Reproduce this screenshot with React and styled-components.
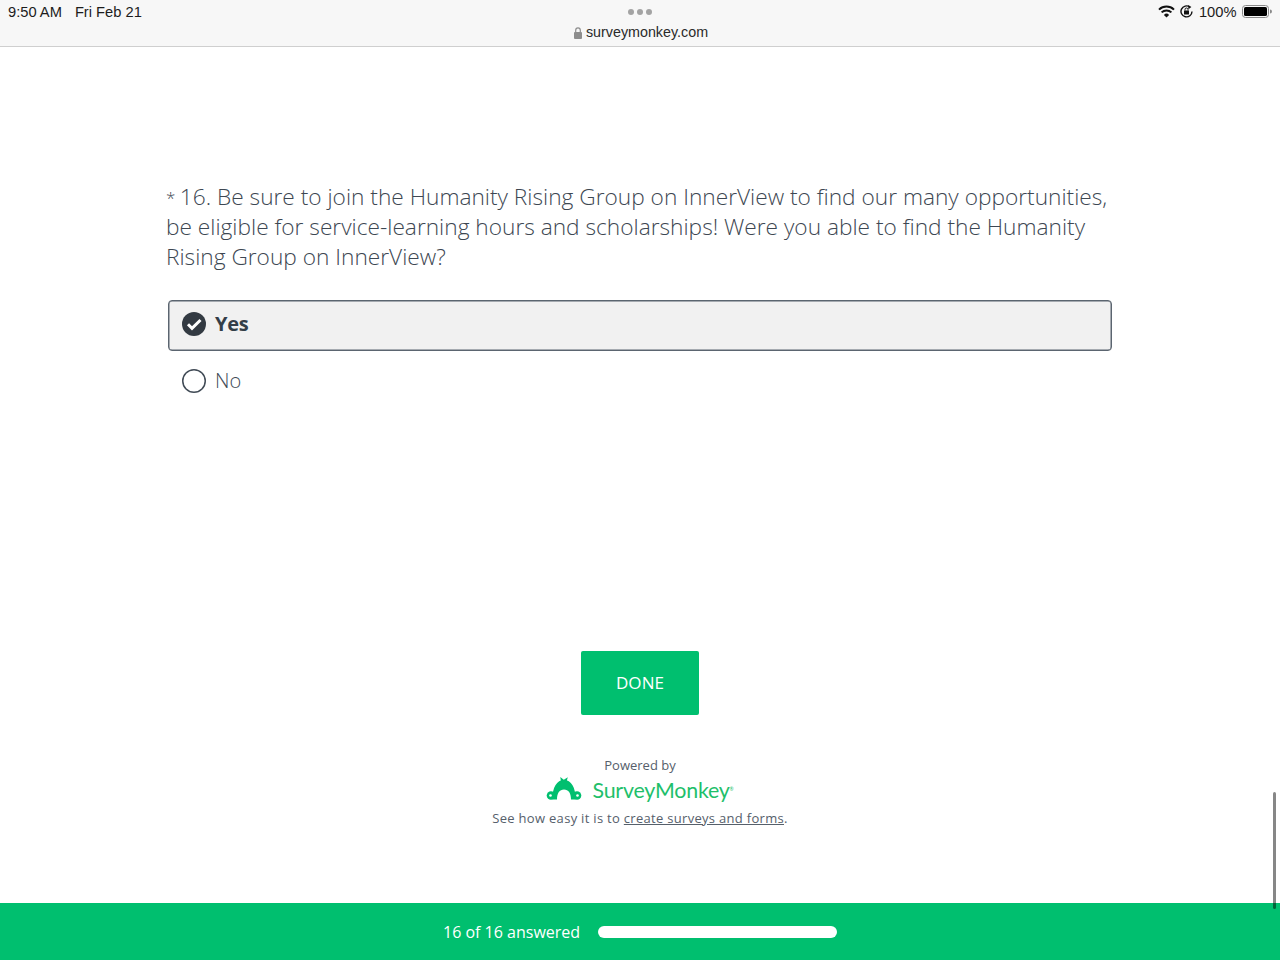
import React from "react";
import styled, { createGlobalStyle } from "styled-components";

const Global = createGlobalStyle`
  html, body {
    margin: 0;
    padding: 0;
    background: #fff;
    overflow: hidden;
  }
  * {
    box-sizing: border-box;
  }
`;

const Page = styled.div`
  position: relative;
  width: 1280px;
  height: 960px;
  display: flex;
  flex-direction: column;
  overflow: hidden;
  font-family: "Open Sans", "Liberation Sans", sans-serif;
  color: #333e48;
`;

const StatusBar = styled.header`
  height: 47px;
  flex: none;
  background: #f7f7f7;
  border-bottom: 1px solid #cfcfcf;
  display: grid;
  grid-template-columns: 1fr auto 1fr;
  padding: 0 8px;
  font-family: "Liberation Sans", sans-serif;
  font-size: 14.7px;
  color: #1c1c1c;
`;

const StatusLeft = styled.div`
  display: flex;
  gap: 13px;
  height: 23px;
  align-items: center;
`;

const StatusCenter = styled.div`
  display: flex;
  flex-direction: column;
  align-items: center;
  padding-top: 9px;
`;

const Dots = styled.div`
  display: flex;
  gap: 3px;
  height: 6px;
  margin-bottom: 9px;
`;

const Dot = styled.span`
  width: 6px;
  height: 6px;
  border-radius: 50%;
  background: #a3a3a3;
`;

const Address = styled.div`
  display: flex;
  align-items: center;
  gap: 4px;
  padding-left: 2px;
  line-height: 17px;
  font-size: 14.3px;
  color: #2a2a2a;
`;

const StatusRight = styled.div`
  display: flex;
  justify-content: flex-end;
  align-items: center;
  gap: 5.5px;
  height: 23px;
`;

const Main = styled.main`
  flex: 1;
  display: flex;
  flex-direction: column;
  align-items: center;
`;

const Question = styled.section`
  width: 948px;
  padding-top: 135px;
`;

const Title = styled.h1`
  margin: 0 0 28px;
  font-size: 22.7px;
  font-weight: 300;
  line-height: 30px;
  color: #3d4752;
`;

const Asterisk = styled.span`
  font-size: 17px;
  line-height: 1;
  vertical-align: 1px;
`;

const Choice = styled.div`
  margin-left: 2px;
  width: 944px;
  display: flex;
  align-items: center;
  gap: 9px;
  padding: 0 13px 4px;
  height: ${({ $selected }) => ($selected ? "51px" : "auto")};
  background: ${({ $selected }) => ($selected ? "#f1f1f1" : "transparent")};
  border: ${({ $selected }) => ($selected ? "1px solid #5b6570" : "1px solid transparent")};
  box-shadow: ${({ $selected }) => ($selected ? "inset 0 0 0 0.5px #5b6570" : "none")};
  border-radius: 4px;
  margin-bottom: ${({ $selected }) => ($selected ? "14px" : "11px")};
`;

const Label = styled.span`
  font-size: 20px;
  line-height: 30px;
  font-weight: ${({ $selected }) => ($selected ? 700 : 300)};
  letter-spacing: ${({ $selected }) => ($selected ? "-0.3px" : "0")};
  color: ${({ $selected }) => ($selected ? "#333e48" : "#414b56")};
`;

const Done = styled.button`
  margin-top: 239px;
  width: 118px;
  height: 64px;
  padding: 0 0 2px;
  border: 0;
  border-radius: 2px;
  background: #00bf6f;
  color: #fff;
  font-family: inherit;
  font-size: 17px;
  letter-spacing: 0.1px;
`;

const Powered = styled.div`
  margin-top: 41px;
  display: flex;
  flex-direction: column;
  align-items: center;
  font-size: 13px;
  line-height: 18px;
  color: #56606b;
`;

const Logo = styled.div`
  display: flex;
  align-items: center;
  gap: 9px;
  height: 35px;
  padding-bottom: 3px;
`;

const Wordmark = styled.span`
  font-family: "Lato", sans-serif;
  font-size: 21.4px;
  font-weight: 400;
  color: #1fbf6b;
  letter-spacing: -0.2px;
`;

const Tm = styled.sup`
  font-size: 5px;
  vertical-align: 7px;
  line-height: 0;
`;

const Promo = styled.p`
  margin: 0;
  letter-spacing: 0.3px;
`;

const PromoLink = styled.a`
  color: inherit;
  text-decoration: underline;
`;

const ProgressBar = styled.footer`
  flex: none;
  height: 57px;
  background: #00bf6f;
  display: flex;
  align-items: center;
  padding: 0 0 0 443px;
  gap: 18px;
  color: #fff;
`;

const ProgressText = styled.span`
  font-size: 16px;
  font-weight: 400;
  white-space: nowrap;
`;

const Track = styled.div`
  width: 239px;
  height: 12px;
  border-radius: 6px;
  background: #fff;
`;

const ScrollThumb = styled.div`
  position: absolute;
  right: 4px;
  top: 792px;
  width: 3px;
  height: 117px;
  border-radius: 2px;
  background: rgba(0, 0, 0, 0.47);
`;

const Checked = () => (
  <svg width="24" height="24" viewBox="0 0 24 24">
    <circle cx="12" cy="12" r="12" fill="#333a42" />
    <path d="M6 12.3l4 4L18.500 8" fill="none" stroke="#fff" strokeWidth="3" />
  </svg>
);

const Unchecked = () => (
  <svg width="24" height="24" viewBox="0 0 24 24">
    <circle cx="12" cy="12" r="11.25" fill="#fff" stroke="#414b56" strokeWidth="1.5" />
  </svg>
);

const Lock = () => (
  <svg width="8" height="12" viewBox="0 0 8 12">
    <path d="M1.700 5V3.200a2.300 2.300 0 0 1 4.600 0V5" fill="none" stroke="#8d8d8d" strokeWidth="1.200" />
    <rect x="0" y="5" width="8" height="7" rx="1" fill="#8d8d8d" />
  </svg>
);

const Wifi = () => (
  <svg width="17" height="13" viewBox="0 0 17 13" fill="none" stroke="#111" strokeWidth="2">
    <path d="M1 4.600a10.800 10.800 0 0 1 15 0" />
    <path d="M3.600 7.400a7 7 0 0 1 9.800 0" />
    <path d="M8.500 12.600L5.900 9.900a3.700 3.700 0 0 1 5.200 0z" fill="#111" stroke="none" />
  </svg>
);

const RotationLock = () => (
  <svg width="13" height="13" viewBox="0 0 13 13" fill="none">
    <path d="M9.800 2A5.500 5.500 0 1 0 12 6.500" stroke="#111" strokeWidth="1.400" />
    <path d="M8.200 0l3.200 2-3 2.200z" fill="#111" />
    <rect x="4" y="5.600" width="5" height="3.800" rx="0.500" fill="#111" />
    <path d="M5 5.600V4.500a1.500 1.500 0 0 1 3 0v1.100" stroke="#111" />
  </svg>
);

const Battery = () => (
  <svg width="30" height="13" viewBox="0 0 30 13">
    <rect x="0.500" y="0.500" width="26" height="12" rx="3" fill="none" stroke="#8a8a8a" />
    <rect x="2" y="2" width="23" height="9" rx="1.600" fill="#000" />
    <path d="M28 4.500a2 2 0 0 1 0 4z" fill="#8a8a8a" />
  </svg>
);

const MonkeyLogo = () => (
  <svg width="37" height="26" viewBox="0 0 37 26">
    <g fill="#00bf6f">
      <path d="M15 5L14.300 0 17.800 2.800 21.800 .2 20.300 5.500z" />
      <path d="M6.500 22.500C6 10.500 11 3 18 3S30 10.500 29.500 22.500H25C25 16 22.500 12.500 18 12.500S11 16 11 22.500z" />
      <circle cx="5" cy="18.500" r="4.300" />
      <circle cx="31" cy="18.500" r="4.300" />
    </g>
    <circle cx="4.500" cy="18.500" r="1.300" fill="#fff" />
    <circle cx="31.500" cy="18.500" r="1.300" fill="#fff" />
  </svg>
);

export default function App() {
  return (
    <Page>
      <Global />
      <StatusBar>
        <StatusLeft>
          <span>9:50 AM</span>
          <span>Fri Feb 21</span>
        </StatusLeft>
        <StatusCenter>
          <Dots>
            <Dot />
            <Dot />
            <Dot />
          </Dots>
          <Address>
            <Lock />
            surveymonkey.com
          </Address>
        </StatusCenter>
        <StatusRight>
          <Wifi />
          <RotationLock />
          <span>100%</span>
          <Battery />
        </StatusRight>
      </StatusBar>
      <Main>
        <Question>
          <Title>
            <Asterisk>* </Asterisk>16. Be sure to join the Humanity Rising Group on InnerView to find our many opportunities,
            be eligible for service-learning hours and scholarships! Were you able to find the Humanity
            Rising Group on InnerView?
          </Title>
          <Choice $selected>
            <Checked />
            <Label $selected>Yes</Label>
          </Choice>
          <Choice>
            <Unchecked />
            <Label>No</Label>
          </Choice>
        </Question>
        <Done>DONE</Done>
        <Powered>
          <span>Powered by</span>
          <Logo>
            <MonkeyLogo />
            <Wordmark>
              SurveyMonkey<Tm>®</Tm>
            </Wordmark>
          </Logo>
          <Promo>
            See how easy it is to <PromoLink href="#">create surveys and forms</PromoLink>.
          </Promo>
        </Powered>
      </Main>
      <ProgressBar>
        <ProgressText>16 of 16 answered</ProgressText>
        <Track />
      </ProgressBar>
      <ScrollThumb />
    </Page>
  );
}
